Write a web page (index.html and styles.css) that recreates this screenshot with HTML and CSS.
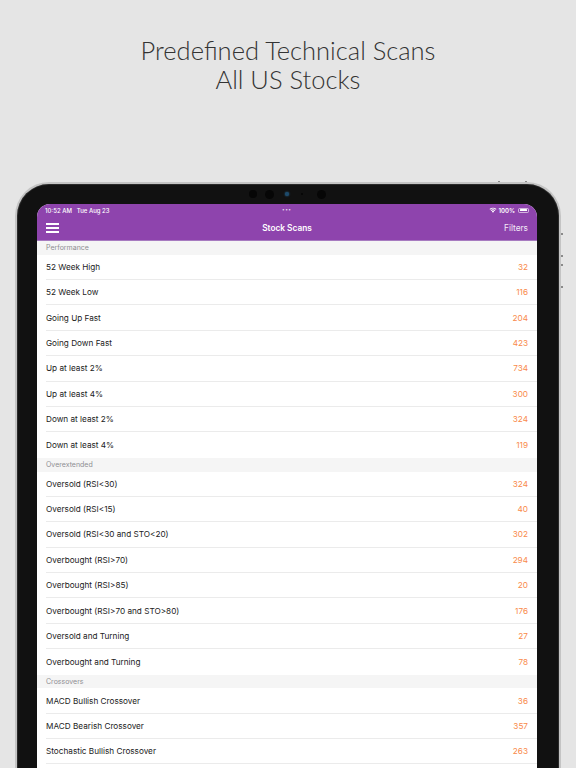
FILE: index.html
```html
<!DOCTYPE html>
<html>
<head>
<meta charset="utf-8">
<link rel="stylesheet" href="styles.css">
</head>
<body>
<header class="hero">
  <h1 class="hero-title">Predefined Technical Scans<br>All US Stocks</h1>
</header>
<div class="device">
  <span class="btn btn-top1"></span>
  <span class="btn btn-top2"></span>
  <span class="btn btn-side1"></span>
  <span class="btn btn-side2"></span>
  <span class="btn btn-side3"></span>
  <span class="btn btn-side4"></span>
  <div class="bezel-top">
    <span class="cam cam-a"></span>
    <span class="cam cam-b"></span>
    <span class="cam cam-lens"></span>
    <span class="cam cam-dot"></span>
    <span class="cam cam-c"></span>
  </div>
  <div class="screen">
    <div class="statusbar">
      <span class="sb-time">10:52 AM&nbsp;&nbsp;&nbsp;Tue Aug 23</span>
      <span class="sb-dots">•••</span>
      <span class="sb-right">
        <svg class="wifi" width="8" height="6" viewBox="0 0 16 12"><path d="M8 11.5 L5.6 8.9 A3.4 3.4 0 0 1 10.4 8.9 Z" fill="#fff"/><path d="M3.4 6.6 A6.6 6.6 0 0 1 12.6 6.6 L11.3 8 A4.8 4.8 0 0 0 4.7 8 Z" fill="#fff"/><path d="M1 4.2 A10 10 0 0 1 15 4.2 L13.7 5.6 A8.2 8.2 0 0 0 2.3 5.6 Z" fill="#fff"/></svg>
        <span class="sb-pct">100%</span>
        <span class="battery"><span class="battery-fill"></span></span>
      </span>
    </div>
    <nav class="navbar">
      <span class="hamburger"><i></i><i></i><i></i></span>
      <span class="nav-title">Stock Scans</span>
      <span class="nav-action">Filters</span>
    </nav>
    <div class="list">
      <div class="section-head">Performance</div>
      <div class="section">
        <div class="row"><span>52 Week High</span><span class="count">32</span></div>
        <div class="row"><span>52 Week Low</span><span class="count">116</span></div>
        <div class="row"><span>Going Up Fast</span><span class="count">204</span></div>
        <div class="row"><span>Going Down Fast</span><span class="count">423</span></div>
        <div class="row"><span>Up at least 2%</span><span class="count">734</span></div>
        <div class="row"><span>Up at least 4%</span><span class="count">300</span></div>
        <div class="row"><span>Down at least 2%</span><span class="count">324</span></div>
        <div class="row"><span>Down at least 4%</span><span class="count">119</span></div>
      </div>
      <div class="section-head">Overextended</div>
      <div class="section">
        <div class="row"><span>Oversold (RSI&lt;30)</span><span class="count">324</span></div>
        <div class="row"><span>Oversold (RSI&lt;15)</span><span class="count">40</span></div>
        <div class="row"><span>Oversold (RSI&lt;30 and STO&lt;20)</span><span class="count">302</span></div>
        <div class="row"><span>Overbought (RSI&gt;70)</span><span class="count">294</span></div>
        <div class="row"><span>Overbought (RSI&gt;85)</span><span class="count">20</span></div>
        <div class="row"><span>Overbought (RSI&gt;70 and STO&gt;80)</span><span class="count">176</span></div>
        <div class="row"><span>Oversold and Turning</span><span class="count">27</span></div>
        <div class="row"><span>Overbought and Turning</span><span class="count">78</span></div>
      </div>
      <div class="section-head">Crossovers</div>
      <div class="section section-open">
        <div class="row"><span>MACD Bullish Crossover</span><span class="count">36</span></div>
        <div class="row"><span>MACD Bearish Crossover</span><span class="count">357</span></div>
        <div class="row"><span>Stochastic Bullish Crossover</span><span class="count">263</span></div>
      </div>
    </div>
  </div>
</div>
</body>
</html>
```
FILE: styles.css
```css
html, body {
  margin: 0;
  padding: 0;
  height: 768px;
  overflow: hidden;
}
body {
  background: #e5e5e5;
  font-family: "Inter", "Liberation Sans", sans-serif;
}
.hero {
  height: 182px;
  box-sizing: border-box;
  padding-top: 36px;
}
.hero-title {
  margin: 0;
  text-align: center;
  font-family: "Lato", "Open Sans", sans-serif;
  font-weight: 300;
  font-size: 25.5px;
  line-height: 29px;
  color: #333333;
  letter-spacing: 0;
}
.device {
  position: relative;
  margin-left: 15px;
  width: 546px;
  height: 640px;
  box-sizing: border-box;
  background: #111111;
  border: 2px solid #c4c4c4;
  border-bottom: none;
  border-radius: 34px 34px 0 0;
  box-shadow: inset 0 0 0 1px #2a2a2a;
  padding: 0 20px;
}
.btn {
  position: absolute;
  background: #8a8a8a;
}
.btn-top1, .btn-top2 {
  top: -3px;
  width: 2px;
  height: 1px;
}
.btn-top1 { left: 481px; }
.btn-top2 { left: 508px; }
.btn-side1, .btn-side2, .btn-side3, .btn-side4 {
  right: -4px;
  width: 2px;
  height: 2px;
}
.btn-side1 { top: 49px; }
.btn-side2 { top: 71px; }
.btn-side3 { top: 80px; }
.btn-side4 { top: 102px; }
.bezel-top {
  height: 20px;
  display: flex;
  align-items: center;
  justify-content: flex-start;
}
.cam {
  display: block;
  flex: none;
  border-radius: 50%;
  background: #060606;
}
.cam-a { width: 8px; height: 8px; margin-left: 212px; }
.cam-b { width: 9px; height: 9px; margin-left: 7.5px; }
.cam-lens { width: 4px; height: 4px; background: #1d4a6b; box-shadow: 0 0 2px #2f6f9a; margin-left: 11.5px; }
.cam-dot { width: 2px; height: 2px; background: #050505; margin-left: 12px; }
.cam-c { width: 9px; height: 9px; margin-left: 13.5px; }
.screen {
  width: 500px;
  height: 620px;
  background: #ffffff;
  border-radius: 13px 13px 0 0;
  overflow: hidden;
}
.statusbar {
  height: 12px;
  background: #8e44ad;
  color: #ffffff;
  font-size: 6px;
  font-weight: 500;
  display: flex;
  align-items: center;
  justify-content: space-between;
  padding: 0 8px 0 8px;
  position: relative;
}
.sb-dots {
  position: absolute;
  left: 245px;
  top: 2px;
  font-size: 5px;
  letter-spacing: 0.5px;
  color: #e6d6ee;
}
.sb-right {
  display: flex;
  align-items: center;
  gap: 2px;
  font-weight: 600;
}
.battery {
  display: block;
  width: 11px;
  height: 5px;
  border: 0.8px solid rgba(255,255,255,0.6);
  border-radius: 1.5px;
  padding: 0.6px;
  box-sizing: border-box;
  margin-left: 1px;
}
.battery-fill {
  display: block;
  width: 100%;
  height: 100%;
  background: #fff;
  border-radius: 0.6px;
}
.navbar {
  height: 24px;
  background: #8e44ad;
  border-bottom: 1px solid #a77bc0;
  display: flex;
  align-items: center;
  justify-content: space-between;
  padding: 0 9px 0 9px;
  position: relative;
  color: #ffffff;
  font-size: 8.3px;
}
.hamburger {
  display: flex;
  flex-direction: column;
  gap: 2.6px;
  width: 13px;
}
.hamburger i {
  display: block;
  height: 1.8px;
  background: #ffffff;
}
.nav-title {
  position: absolute;
  left: 0;
  right: 0;
  text-align: center;
  font-weight: 600;
  pointer-events: none;
}
.nav-action {
  font-weight: 400;
  color: #f3eaf7;
}
.section-head {
  height: 13.7px;
  background: #f5f5f5;
  color: #8e8e93;
  font-size: 7px;
  line-height: 13.7px;
  padding-left: 9px;
}
.row {
  height: 25.4px;
  margin-left: 9px;
  padding-right: 9px;
  display: flex;
  align-items: center;
  justify-content: space-between;
  font-size: 8.2px;
  color: #222222;
  box-sizing: border-box;
  border-bottom: 1px solid #ebebeb;
}
.row:last-child {
  border-bottom: none;
}
.section-open .row:last-child {
  border-bottom: 1px solid #ebebeb;
}
.count {
  color: #f98a4a;
}
```
